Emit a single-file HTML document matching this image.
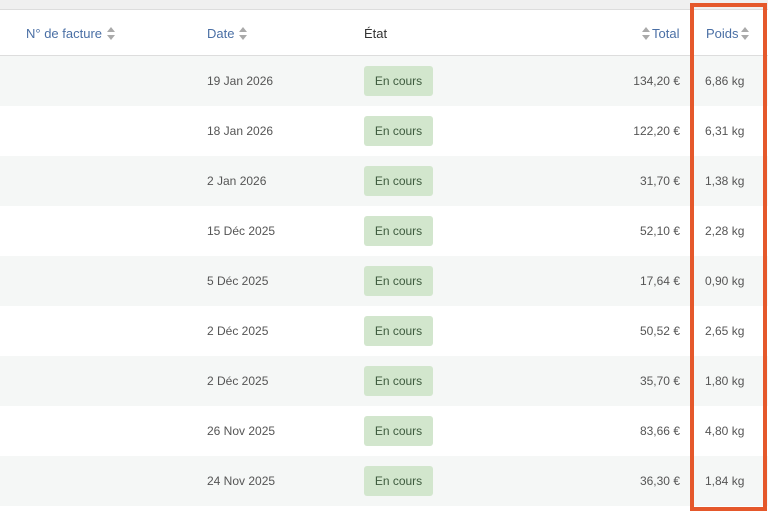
<!DOCTYPE html>
<html><head><meta charset="utf-8"><style>
*{margin:0;padding:0;box-sizing:border-box}
body{width:768px;height:512px;overflow:hidden;background:#fff;font-family:"Liberation Sans",sans-serif;position:relative;color:#555}
.top{position:absolute;left:0;top:0;width:768px;height:10px;background:#f0f0f0;border-bottom:1px solid #ddd}
.hdr{position:absolute;left:0;top:11px;width:768px;height:45px;border-bottom:1px solid #ddd;font-size:13px;color:#4a6fa5}
.hdr span{position:absolute;top:15px}
.hdr svg{position:absolute;top:16px}
.row{position:absolute;left:0;width:768px;height:50px;font-size:12px;color:#555}
.row.g{background:#f5f7f6}
.row span{position:absolute;top:18px}
.b{position:absolute;left:364px;top:10px;width:69px;height:30px;background:#d2e6cd;border-radius:3px;color:#3d5a3d;text-align:center;line-height:30px;font-size:12px}
.box{position:absolute;left:690px;top:3px;width:77px;height:508px;border:4px solid #e5582b}
</style></head><body>
<div class="top"></div>
<div class="hdr">
<span style="left:26px">N° de facture</span>
<svg style="left:107px" width="8" height="13" viewBox="0 0 8 13"><path d="M4 0L8 5H0Z M4 13L8 8H0Z" fill="#aaa"/></svg>
<span style="left:207px">Date</span>
<svg style="left:239px" width="8" height="13" viewBox="0 0 8 13"><path d="M4 0L8 5H0Z M4 13L8 8H0Z" fill="#aaa"/></svg>
<span style="left:364px;color:#333">État</span>
<svg style="left:642px" width="8" height="13" viewBox="0 0 8 13"><path d="M4 0L8 5H0Z M4 13L8 8H0Z" fill="#aaa"/></svg>
<span style="left:652px">Total</span>
<span style="left:706px">Poids</span>
<svg style="left:741px" width="8" height="13" viewBox="0 0 8 13"><path d="M4 0L8 5H0Z M4 13L8 8H0Z" fill="#aaa"/></svg>
</div>
<div class="row g" style="top:56px"><span style="left:207px">19 Jan 2026</span><div class="b">En cours</div><span style="right:88px">134,20 €</span><span style="left:705px">6,86 kg</span></div>
<div class="row" style="top:106px"><span style="left:207px">18 Jan 2026</span><div class="b">En cours</div><span style="right:88px">122,20 €</span><span style="left:705px">6,31 kg</span></div>
<div class="row g" style="top:156px"><span style="left:207px">2 Jan 2026</span><div class="b">En cours</div><span style="right:88px">31,70 €</span><span style="left:705px">1,38 kg</span></div>
<div class="row" style="top:206px"><span style="left:207px">15 Déc 2025</span><div class="b">En cours</div><span style="right:88px">52,10 €</span><span style="left:705px">2,28 kg</span></div>
<div class="row g" style="top:256px"><span style="left:207px">5 Déc 2025</span><div class="b">En cours</div><span style="right:88px">17,64 €</span><span style="left:705px">0,90 kg</span></div>
<div class="row" style="top:306px"><span style="left:207px">2 Déc 2025</span><div class="b">En cours</div><span style="right:88px">50,52 €</span><span style="left:705px">2,65 kg</span></div>
<div class="row g" style="top:356px"><span style="left:207px">2 Déc 2025</span><div class="b">En cours</div><span style="right:88px">35,70 €</span><span style="left:705px">1,80 kg</span></div>
<div class="row" style="top:406px"><span style="left:207px">26 Nov 2025</span><div class="b">En cours</div><span style="right:88px">83,66 €</span><span style="left:705px">4,80 kg</span></div>
<div class="row g" style="top:456px"><span style="left:207px">24 Nov 2025</span><div class="b">En cours</div><span style="right:88px">36,30 €</span><span style="left:705px">1,84 kg</span></div>
<div class="box"></div>
</body></html>
